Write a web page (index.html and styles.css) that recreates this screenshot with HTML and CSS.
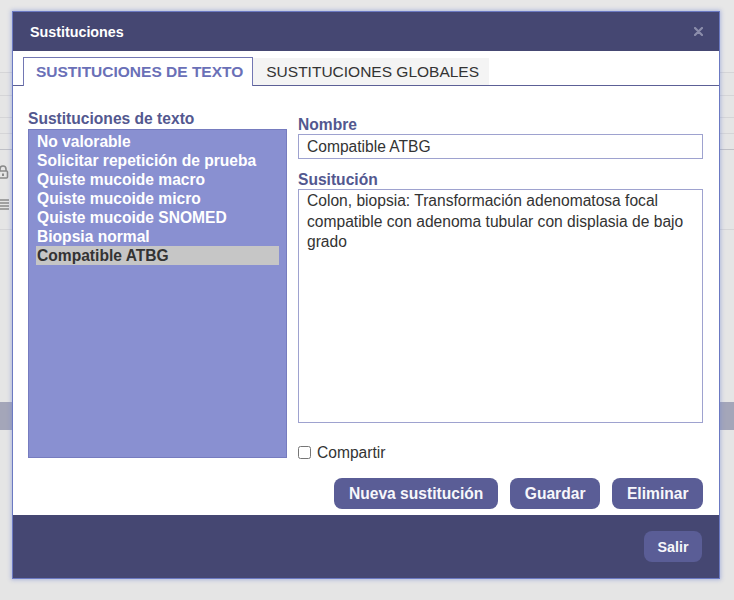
FILE: index.html
```html
<!DOCTYPE html>
<html lang="es">
<head>
<meta charset="utf-8">
<title>Sustituciones</title>
<link rel="stylesheet" href="styles.css">
</head>
<body>
<div class="page">
  <div class="bg-row bg-a"></div>
  <div class="bg-row bg-b"></div>
  <div class="bg-row bg-c"></div>
  <div class="bg-row bg-d"></div>
  <div class="bg-row bg-e"></div>
  <div class="bg-row bg-f">
    <div class="bg-tools">
      <svg class="bg-icon" width="12" height="14" viewBox="0 0 12 14"><path d="M3 6V4a3 3 0 0 1 6 0v2" fill="none" stroke="#8a8a8a" stroke-width="1.6"/><rect x="1.5" y="6" width="9" height="7" rx="1" fill="none" stroke="#8a8a8a" stroke-width="1.6"/><rect x="5" y="8.5" width="2" height="2.5" fill="#8a8a8a"/></svg>
      <svg class="bg-icon" width="12" height="12" viewBox="0 0 12 12"><path d="M0 2h12M3 5h9M0 8h12M3 11h9" stroke="#8a8a8a" stroke-width="1.4"/></svg>
    </div>
  </div>
  <div class="bg-gap"></div>
  <div class="bg-bar"></div>
</div>

<div class="dialog">
  <div class="dlg-header">
    <span class="dlg-title">Sustituciones</span>
    <svg class="dlg-close" width="9" height="9" viewBox="0 0 9 9"><path d="M1 1l7 7M8 1L1 8" stroke="#8b8dab" stroke-width="2.2" stroke-linecap="round"/></svg>
  </div>
  <div class="tabs">
    <div class="tab active">SUSTITUCIONES DE TEXTO</div>
    <div class="tab">SUSTITUCIONES GLOBALES</div>
  </div>
  <div class="dlg-body">
    <div class="col-left">
      <div class="field-label">Sustituciones de texto</div>
      <ul class="subs-list">
        <li class="subs-item">No valorable</li>
        <li class="subs-item">Solicitar repetición de prueba</li>
        <li class="subs-item">Quiste mucoide macro</li>
        <li class="subs-item">Quiste mucoide micro</li>
        <li class="subs-item">Quiste mucoide SNOMED</li>
        <li class="subs-item">Biopsia normal</li>
        <li class="subs-item selected">Compatible ATBG</li>
      </ul>
    </div>
    <div class="col-right">
      <label class="field-label" for="nombre">Nombre</label>
      <input class="text-input" id="nombre" type="text" value="Compatible ATBG">
      <label class="field-label gap-label" for="sust">Susitución</label>
      <textarea class="text-area" id="sust">Colon, biopsia: Transformación adenomatosa focal compatible con adenoma tubular con displasia de bajo grado</textarea>
      <div class="check-row">
        <input class="check" type="checkbox" id="compartir">
        <label class="check-label" for="compartir">Compartir</label>
      </div>
      <div class="actions">
        <button class="btn">Nueva sustitución</button>
        <button class="btn">Guardar</button>
        <button class="btn">Eliminar</button>
      </div>
    </div>
  </div>
  <div class="dlg-footer">
    <button class="btn btn-small">Salir</button>
  </div>
</div>
</body>
</html>
```

FILE: styles.css
```css
* { box-sizing: border-box; }

html, body {
  margin: 0;
  padding: 0;
}

body {
  width: 734px;
  height: 600px;
  overflow: hidden;
  background: #e5e5e5;
  font-family: "Liberation Sans", Arial, sans-serif;
  position: relative;
}

/* background page under the modal */
.page {
  display: flex;
  flex-direction: column;
}
.bg-row { border-bottom: 1px solid #d5d5d7; }
.bg-a { height: 73px; background: #e7e7e7; }
.bg-b { height: 23px; }
.bg-c { height: 22px; }
.bg-d { height: 16px; }
.bg-e { height: 16px; border-bottom-color: #bfc0c6; }
.bg-f { height: 80px; }
.bg-tools {
  display: flex;
  flex-direction: column;
  gap: 19px;
  padding-top: 15px;
  margin-left: -3px;
}
.bg-icon { display: block; }
.bg-gap { height: 172px; }
.bg-bar { height: 28px; background: #a4a6b9; }

/* modal */
.dialog {
  position: absolute;
  left: 12px;
  top: 11px;
  width: 708px;
  height: 568px;
  border: 1px solid #6b79c2;
  box-shadow: 0 0 4px 1px rgba(110, 130, 210, 0.45);
  background: #fff;
  display: flex;
  flex-direction: column;
}

.dlg-header {
  height: 39px;
  background: #454772;
  display: flex;
  align-items: center;
  justify-content: space-between;
  padding: 0 16px 0 17px;
}
.dlg-title {
  color: #fff;
  font-weight: bold;
  font-size: 14.3px;
}
.dlg-close { display: block; }

.tabs {
  display: flex;
  align-items: flex-end;
  padding: 6px 0 0 10px;
  border-bottom: 1px solid #5c6096;
}
.tab {
  height: 27px;
  line-height: 27px;
  padding: 0 9px 0 12px;
  font-size: 15.5px;
  color: #333;
  background: #f4f4f4;
  border: 1px solid transparent;
  border-top: none;
  border-bottom: none;
  white-space: nowrap;
}
.tab.active {
  height: 29px;
  line-height: 28px;
  border: 1px solid #7277b3;
  border-bottom: none;
  margin-bottom: -1px;
  background: #fff;
  color: #6a70b7;
  font-weight: bold;
}

.dlg-body {
  height: 429px;
  display: flex;
  gap: 11px;
  padding: 0 16px 0 15px;
}
.col-left {
  width: 259px;
  padding-top: 24px;
}
.col-right {
  flex: 1;
  padding-top: 30px;
  display: flex;
  flex-direction: column;
}

.field-label {
  display: block;
  height: 18px;
  line-height: 18px;
  font-size: 15.6px;
  font-weight: bold;
  color: #53588f;
}
.gap-label { margin-top: 12px; }

.subs-list {
  list-style: none;
  margin: 1px 0 0;
  padding: 2px 7px;
  height: 329px;
  background: #8990d1;
  border: 1px solid #767cbf;
}
.subs-item {
  height: 19px;
  line-height: 19px;
  padding-left: 1px;
  font-size: 15.6px;
  font-weight: bold;
  color: #fff;
  white-space: nowrap;
}
.subs-item.selected {
  background: #c6c6c6;
  color: #333;
}

.text-input {
  display: block;
  width: 100%;
  height: 25px;
  margin: 0;
  border: 1px solid #9ea2cf;
  padding: 0 8px;
  font-family: inherit;
  font-size: 15.6px;
  color: #333;
  outline: none;
}
.text-area {
  display: block;
  width: 100%;
  height: 234px;
  margin: 0;
  border: 1px solid #9ea2cf;
  padding: 1px 4px 0 8px;
  font-family: inherit;
  font-size: 15.6px;
  line-height: 20.5px;
  color: #333;
  resize: none;
  outline: none;
}

.check-row {
  margin-top: 20px;
  height: 18px;
  display: flex;
  align-items: center;
  gap: 6px;
}
.check {
  width: 13px;
  height: 13px;
  margin: 0;
}
.check-label {
  font-size: 15.6px;
  color: #333;
  line-height: 18px;
  padding-top: 2px;
}

.actions {
  margin-top: 17px;
  display: flex;
  justify-content: flex-end;
  gap: 12.5px;
}
.btn {
  height: 31px;
  padding: 0 14.5px;
  margin: 0;
  border: none;
  border-radius: 8px;
  background: #5a5d96;
  color: #f7f7fb;
  font-family: inherit;
  font-size: 15.6px;
  font-weight: bold;
  cursor: pointer;
}

.dlg-footer {
  flex: 1;
  background: #454772;
  display: flex;
  justify-content: flex-end;
  align-items: flex-start;
  padding: 16px 17px 0 0;
}
.btn-small {
  padding: 0 13.5px;
  font-size: 14.3px;
}
```
